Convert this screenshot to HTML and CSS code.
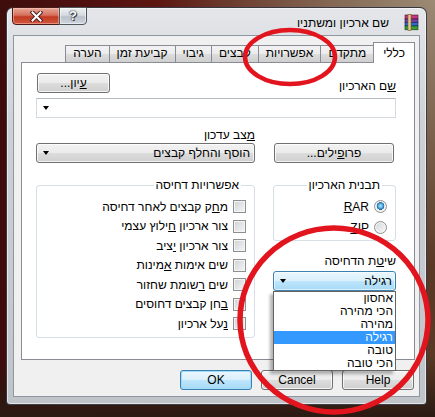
FILE: index.html
```html
<!DOCTYPE html>
<html lang="he">

<head>
   <meta charset="UTF-8">
   <meta name="viewport" content="width=device-width, initial-scale=1.0">
   <title>שם ארכיון ומשתניו</title>

   <link rel="stylesheet" href="styles.css">
</head>

<body>
   <div class="window">
      <div class="titlebar">
         <div class="caption__buttons">
            <div class="caption__close">
               <svg width="13" height="11" viewBox="0 0 13 11">
                  <path d="M2.5 1.5 L10.5 9.5 M10.5 1.5 L2.5 9.5" stroke="#4a2020" stroke-width="4" stroke-linecap="square" />
                  <path d="M2.5 1.5 L10.5 9.5 M10.5 1.5 L2.5 9.5" stroke="#fff" stroke-width="2" stroke-linecap="square" />
               </svg>
            </div>
            <div class="caption__help">?</div>
         </div>

         <div class="title">
            <span class="title__text" dir="rtl">שם ארכיון ומשתניו</span>
            <svg class="title__icon" width="17" height="17" viewBox="0 0 17 17">
               <rect x="2" y="1" width="13" height="4" fill="#c4367e" stroke="#4a1530" stroke-width="0.6" />
               <rect x="2" y="5" width="13" height="3.5" fill="#7a3d9e" stroke="#2c1540" stroke-width="0.6" />
               <rect x="2" y="8.5" width="13" height="3.5" fill="#2f6cc8" stroke="#10254a" stroke-width="0.6" />
               <rect x="2" y="12" width="13" height="3.8" fill="#3c9a3a" stroke="#143a14" stroke-width="0.6" />
               <rect x="5" y="0.5" width="3" height="16" fill="#e0c88e" stroke="#7a5a28" stroke-width="0.6" />
            </svg>
         </div>
      </div>

      <div class="client" dir="rtl">
         <div class="tabs">
            <div class="tab tab--active">כללי</div>
            <div class="tab">מתקדם</div>
            <div class="tab">אפשרויות</div>
            <div class="tab">קבצים</div>
            <div class="tab">גיבוי</div>
            <div class="tab">קביעת זמן</div>
            <div class="tab">הערה</div>
         </div>

         <div class="panel">
            <div class="name__row">
               <div class="label"><u>ש</u>ם הארכיון</div>
               <div class="button button--browse"><u>ע</u>יון...</div>
            </div>

            <div class="combo combo--edit">
               <span class="arrow"></span>
            </div>

            <div class="columns">
               <div class="cell cell--bottom">
                  <div class="button button--profiles">פרו<u>פ</u>ילים...</div>
               </div>

               <div class="cell">
                  <div class="label"><u>מ</u>צב עדכון</div>
                  <div class="combo combo--button">
                     <span class="combo__text">הוסף והחלף קבצים</span>
                     <span class="arrow"></span>
                  </div>
               </div>

               <div class="cell">
                  <fieldset class="group group--format">
                     <legend>תבנית הארכיון</legend>
                     <div class="option">
                        <span class="radio radio--checked"></span>
                        <span><u>R</u>AR</span>
                     </div>
                     <div class="option">
                        <span class="radio"></span>
                        <span><u>Z</u>IP</span>
                     </div>
                  </fieldset>

                  <div class="label label--method">שי<u>ט</u>ת הדחיסה</div>
                  <div class="select">
                     <div class="combo combo--hover">
                        <span class="combo__text">רגילה</span>
                        <span class="arrow"></span>
                     </div>
                     <div class="list">
                        <div class="list__item">אחסון</div>
                        <div class="list__item">הכי מהירה</div>
                        <div class="list__item">מהירה</div>
                        <div class="list__item list__item--selected">רגילה</div>
                        <div class="list__item">טובה</div>
                        <div class="list__item">הכי טובה</div>
                     </div>
                  </div>
               </div>

               <div class="cell">
                  <fieldset class="group group--options">
                     <legend>אפשרויות דחיסה</legend>
                     <div class="check"><span class="box"></span><span>מ<u>ח</u>ק קבצים לאחר דחיסה</span></div>
                     <div class="check"><span class="box"></span><span>צור ארכיון <u>ח</u>ילוץ עצמי</span></div>
                     <div class="check"><span class="box"></span><span>צור ארכיון <u>י</u>ציב</span></div>
                     <div class="check"><span class="box"></span><span>שים אימות <u>א</u>מינות</span></div>
                     <div class="check"><span class="box"></span><span>שים <u>ר</u>שומת שחזור</span></div>
                     <div class="check"><span class="box"></span><span><u>ב</u>חן קבצים דחוסים</span></div>
                     <div class="check"><span class="box"></span><span><u>נ</u>על ארכיון</span></div>
                  </fieldset>
               </div>
            </div>
         </div>

         <div class="buttons">
            <div class="button">Help</div>
            <div class="button">Cancel</div>
            <div class="button button--default">OK</div>
         </div>
      </div>
   </div>

   <svg class="marks" width="435" height="417" viewBox="0 0 435 417">
      <ellipse cx="290" cy="57" rx="45" ry="27" fill="none" stroke="#e2141e" stroke-width="4.5" />
      <ellipse cx="334" cy="320" rx="94" ry="92" fill="none" stroke="#e2141e" stroke-width="5.5" />
   </svg>
</body>

</html>
```

FILE: styles.css
```css
* {
   font-family: "Liberation Sans", "DejaVu Sans", sans-serif;
   box-sizing: border-box;
   font-size: 12px;
   line-height: 14px;
   padding: 0;
   margin: 0;
}

body {
   position: relative;
   width: 435px;
   height: 417px;
   overflow: hidden;
   padding: 7px 0 0 6px;
   color: #000;
   background:
      radial-gradient(ellipse at 100% 0%, #9c8a74 0%, rgba(156, 138, 116, 0) 45%),
      linear-gradient(to bottom, rgba(0, 0, 0, 0) 85%, #2a1a12 100%),
      linear-gradient(to right, #3e0c0c, #5c1612 35%, #5a3a26 100%);
}

/* window frame */

.window {
   width: 421px;
   height: 398px;
   padding: 0 6px;
   border: 1px solid rgba(20, 20, 30, 0.8);
   border-radius: 7px 7px 4px 4px;
   background: linear-gradient(to bottom, #e4e6ea, #cdd1d6 30%, #c0c4c9 100%);
   box-shadow: inset 0 0 0 1px rgba(255, 255, 255, 0.55);
}

.titlebar {
   display: flex;
   justify-content: space-between;
   height: 27px;
}

.caption__buttons {
   display: flex;
   margin-left: -1px;
   margin-top: -1px;
}

.caption__close {
   width: 48px;
   height: 18px;
   display: flex;
   align-items: center;
   justify-content: center;
   border: 1px solid #4a1a18;
   border-radius: 0 0 0 4px;
   background: linear-gradient(to bottom, #e8a898 0%, #d6705c 45%, #c23a22 55%, #d2583e 100%);
   box-shadow: inset 0 0 0 1px rgba(255, 210, 200, 0.45);
}

.caption__help {
   width: 28px;
   height: 18px;
   margin-left: -1px;
   border: 1px solid #50565e;
   border-radius: 0 0 4px 0;
   background: linear-gradient(to bottom, #eef0f3 0%, #d6dbe1 45%, #b9c1cb 55%, #cfd6de 100%);
   box-shadow: inset 0 0 0 1px rgba(255, 255, 255, 0.5);
   color: #fff;
   font-weight: 700;
   font-size: 13px;
   line-height: 16px;
   text-align: center;
   text-shadow: 0 0 1px #222, 0 0 2px #333, 1px 1px 0 #444;
}

.title {
   display: flex;
   align-items: center;
   gap: 14px;
   padding-top: 2px;
}

.title__text {
   color: #000;
}

/* client area */

.client {
   height: 362px;
   border: 1px solid #8d96a1;
   background: #f0f0f0;
   padding: 6px 4px 0 7px;
}

.tabs {
   display: flex;
   align-items: flex-end;
   height: 20px;
   position: relative;
   z-index: 1;
}

.tab {
   height: 17px;
   padding: 0 7px;
   margin-left: -1px;
   border: 1px solid #898c95;
   border-bottom: none;
   background: linear-gradient(to bottom, #f3f3f3, #ebebeb 50%, #dddddd 50%, #cfcfcf);
   line-height: 15px;
   white-space: nowrap;
}

.tab--active {
   height: 21px;
   margin-bottom: -1px;
   padding: 0 9px;
   background: #fff;
   line-height: 20px;
}

.panel {
   height: 298px;
   background: #fff;
   border: 1px solid #898c95;
   padding: 10px 18px 0 14px;
}

.name__row {
   display: flex;
   justify-content: space-between;
   align-items: flex-end;
}

.label {
   white-space: nowrap;
}

/* buttons */

.button {
   width: 72px;
   height: 20px;
   border: 1px solid #707070;
   border-radius: 3px;
   background: linear-gradient(to bottom, #f2f2f2, #ebebeb 50%, #dddddd 50%, #cfcfcf);
   box-shadow: inset 0 0 0 1px rgba(255, 255, 255, 0.75);
   display: flex;
   align-items: center;
   justify-content: center;
   white-space: nowrap;
}

.button--browse {
   width: 73px;
   margin-left: 1px;
}

.button--profiles {
   width: 120px;
   margin-right: 2px;
}

.button--default {
   border-color: #3c7fb1;
   background: linear-gradient(to bottom, #eaf6fd, #d9f0fc 50%, #bee6fd 50%, #a7d9f5);
   box-shadow: inset 0 0 0 1px #9fdcf6;
}

.buttons {
   display: flex;
   gap: 9px;
   margin-top: 10px;
   margin-right: 1px;
}

/* combo boxes */

.combo {
   position: relative;
   height: 20px;
   display: flex;
   align-items: center;
   padding: 0 4px 0 0;
}

.combo--edit {
   margin-top: 5px;
   background: #fff;
   border: 1px solid #d5dbe1;
   border-top-color: #b8bcc4;
}

.combo--button {
   margin-top: 1px;
   border: 1px solid #707070;
   border-radius: 3px;
   background: linear-gradient(to bottom, #f2f2f2, #ebebeb 50%, #dddddd 50%, #cfcfcf);
   box-shadow: inset 0 0 0 1px rgba(255, 255, 255, 0.75);
}

.combo--hover {
   margin-top: 3px;
   padding-right: 3px;
   border: 1px solid #3c7fb1;
   border-radius: 3px;
   background: linear-gradient(to bottom, #eaf6fd, #d9f0fc 50%, #bee6fd 50%, #a7d9f5);
   box-shadow: inset 0 0 0 1px rgba(255, 255, 255, 0.6);
}

.combo__text {
   white-space: nowrap;
}

.arrow {
   position: absolute;
   left: 6px;
   top: 50%;
   margin-top: -2px;
   border-left: 3.5px solid transparent;
   border-right: 3.5px solid transparent;
   border-top: 4px solid #000;
}

/* layout of the lower part */

.columns {
   display: grid;
   grid-template-columns: 123px 219px;
   column-gap: 18px;
   row-gap: 15px;
   margin-top: 10px;
}

.cell {
   display: flex;
   flex-direction: column;
}

.cell--bottom {
   justify-content: flex-end;
   align-items: flex-start;
}

/* group boxes */

.group {
   border: 1px solid #d5dfe5;
   border-radius: 3px;
   padding: 5px 8px 3px 8px;
}

.group legend {
   padding: 0 2px;
   margin-right: 5px;
}

.group--format {
   padding-top: 4px;
   padding-bottom: 2px;
}

.option {
   display: flex;
   align-items: center;
   gap: 5px;
   height: 21px;
}

.check {
   display: flex;
   align-items: center;
   gap: 5px;
   height: 19.5px;
   white-space: nowrap;
}

.box {
   width: 13px;
   height: 13px;
   flex: none;
   border: 1px solid #8e8f8f;
   background: linear-gradient(135deg, #cfd1d4, #f6f6f6);
   box-shadow: inset 0 0 0 1px #f4f4f4;
}

.radio {
   width: 13px;
   height: 13px;
   flex: none;
   border: 1px solid #8e8f8f;
   border-radius: 50%;
   background: linear-gradient(135deg, #d4d6d9, #f8f8f8);
   box-shadow: inset 0 0 0 1px #f6f6f6;
}

.radio--checked {
   background: radial-gradient(circle at 50% 45%, #bfe8fb 0%, #47a5dc 30%, #1c5f95 46%, #f4f4f4 50%, #dadcdf 100%);
}

.label--method {
   margin-top: 13px;
}

/* open drop-down list */

.select {
   position: relative;
}

.list {
   position: absolute;
   top: 100%;
   left: 0;
   right: 0;
   z-index: 2;
   background: #fff;
   border: 1px solid #646464;
   box-shadow: -3px 3px 3px rgba(0, 0, 0, 0.3);
}

.list__item {
   height: 13px;
   line-height: 13px;
   padding-right: 2px;
   white-space: nowrap;
}

.list__item--selected {
   background: #3399ff;
   color: #fff;
}

/* red marks drawn over the screenshot */

.marks {
   position: absolute;
   top: 0;
   left: 0;
   z-index: 5;
   pointer-events: none;
}
```
